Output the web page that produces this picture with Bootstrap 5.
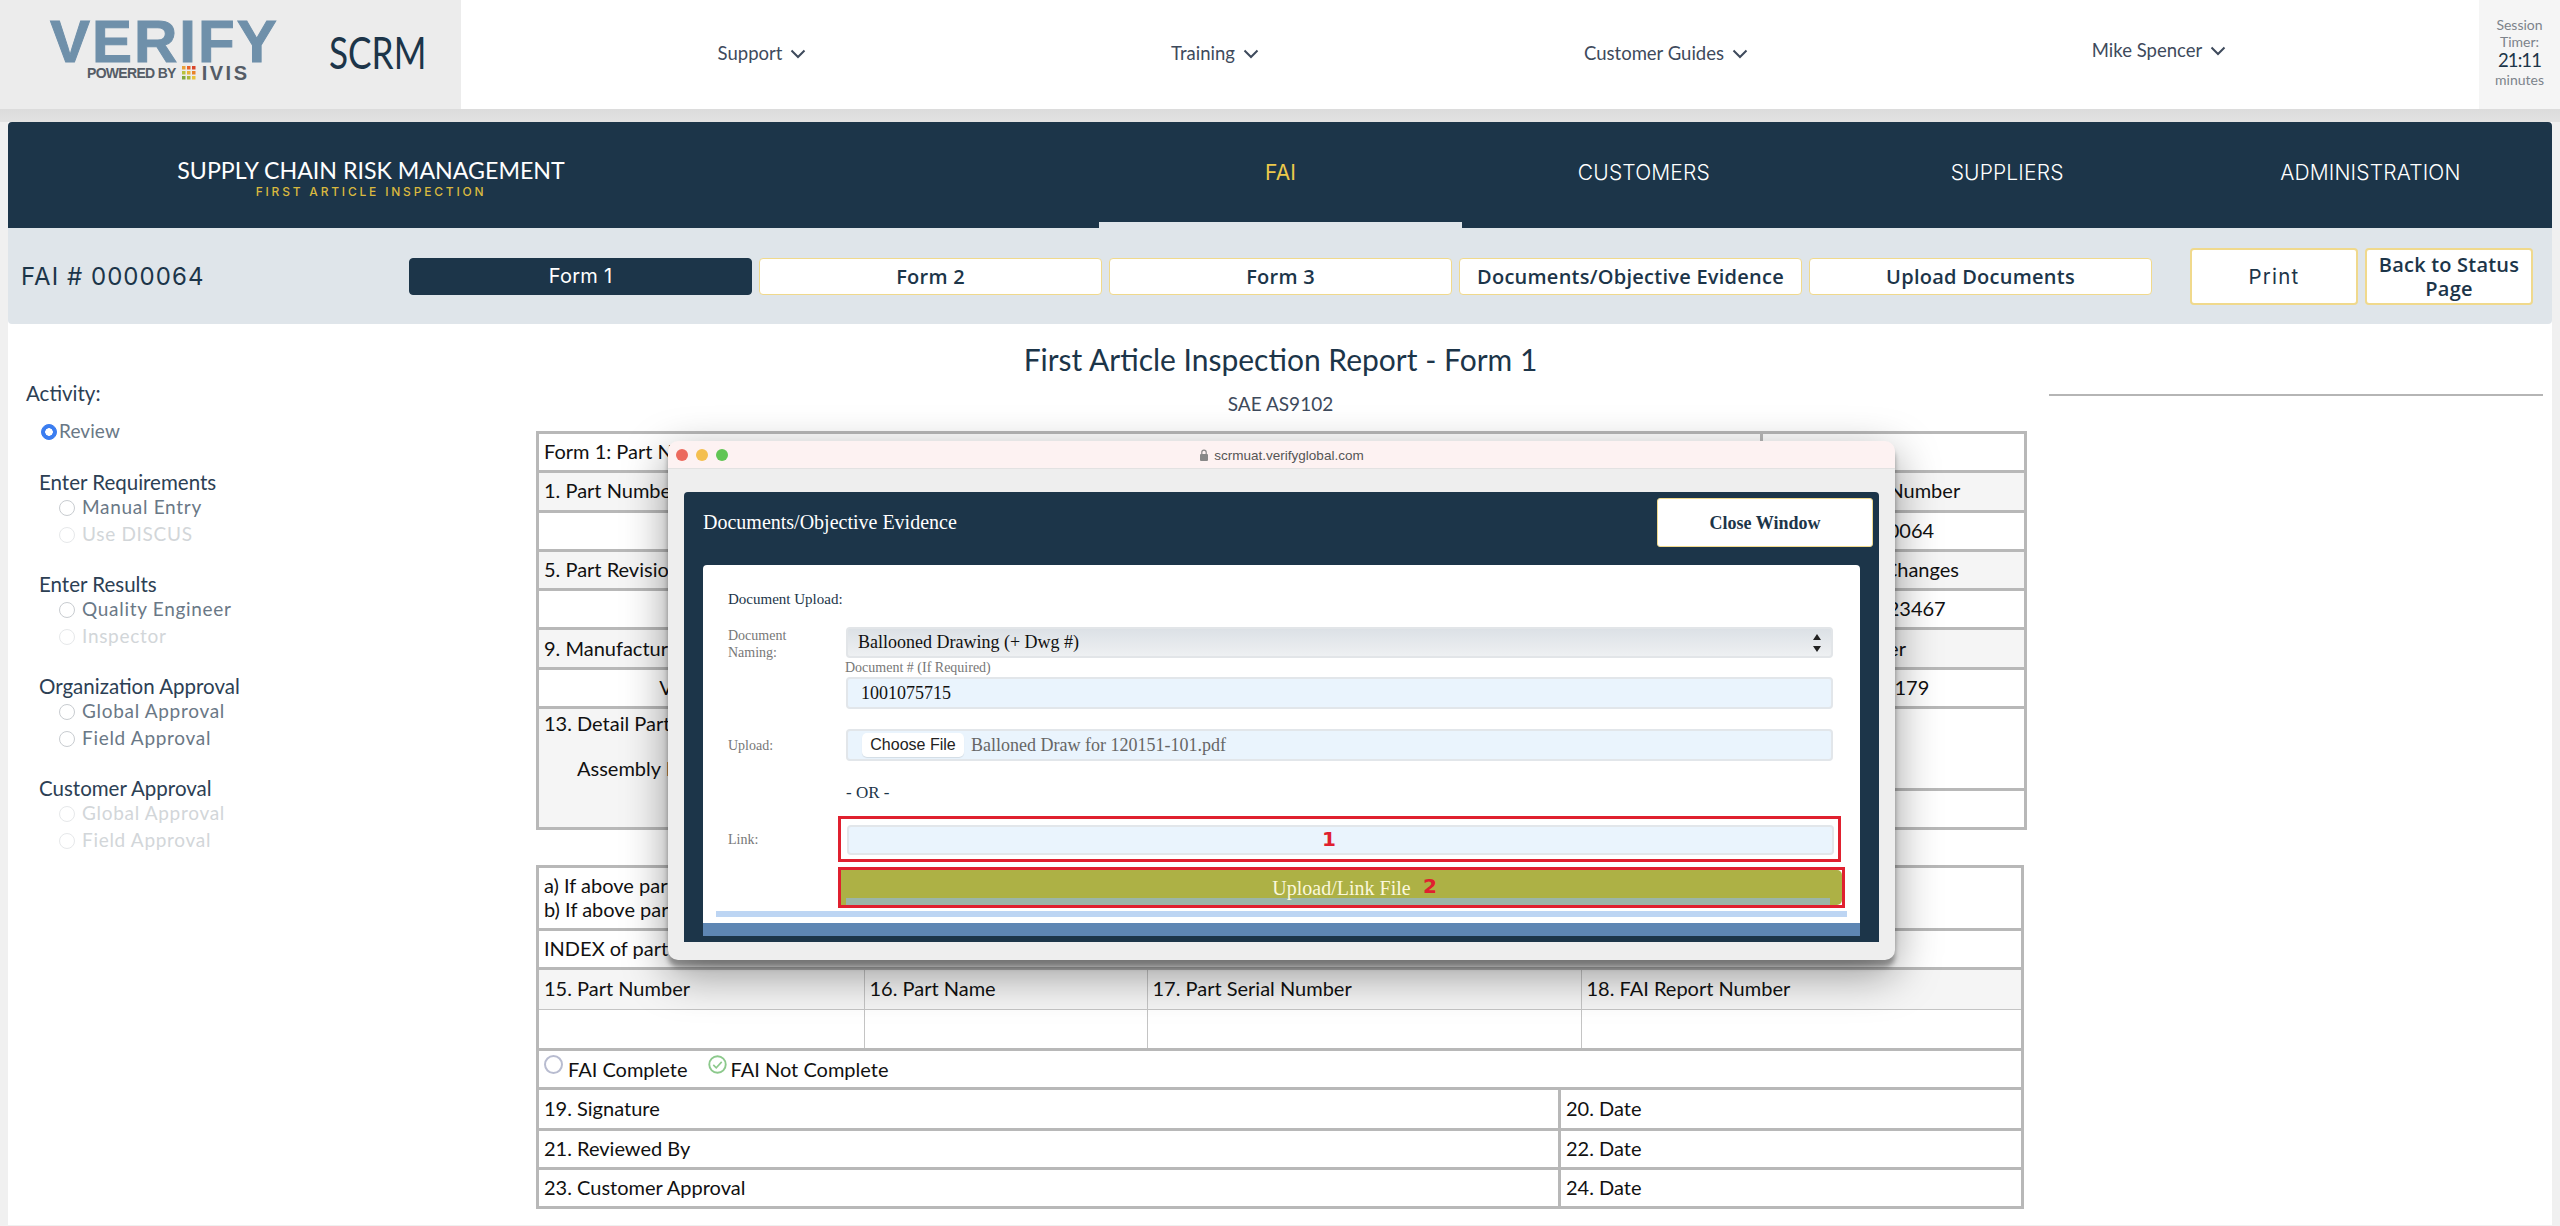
<!DOCTYPE html>
<html lang="en">
<head>
<meta charset="utf-8">
<title>FAI Form 1</title>
<link href="https://cdn.jsdelivr.net/npm/bootstrap@5.3.0/dist/css/bootstrap.min.css" rel="stylesheet">
<style>
html,body{height:1226px;overflow:hidden}
body{background:#f0f0f0;font-family:Lato,"Liberation Sans",sans-serif;color:#111;position:relative;width:2560px}
.topbar{height:109px;background:#fff;box-shadow:0 1px 2px rgba(0,0,0,.18)}
.gutter{height:13px;background:linear-gradient(#dcdcdc,#e2e2e2)}
.logopanel{width:461px;background:#ececec;position:relative}
.vlogo{position:absolute;left:50px;top:20px;font:700 60px/44px "Liberation Sans",sans-serif;color:#6f90aa;letter-spacing:2px;-webkit-text-stroke:1px #6f90aa}
.vsub{position:absolute;left:87px;top:65px;display:flex;align-items:center;gap:6px;color:#555c66;white-space:nowrap}
.vsub b{font:700 14px/16px "Liberation Sans",sans-serif;letter-spacing:-.7px}
.vsub i{font:700 20px/16px "Liberation Sans",sans-serif;letter-spacing:2.5px}
.scrm{position:absolute;left:329px;top:27px;font:400 44px/50px Lato,"Liberation Sans",sans-serif;color:#1c3549;transform:scaleX(.8);transform-origin:0 0}
.topnav{flex:1;display:grid;grid-template-columns:454px 452px 450px 536px;padding-left:74px}
.topnav a{display:flex;align-items:center;justify-content:center;gap:8px;color:#3e4a5c;font-size:18.5px;text-decoration:none;padding-bottom:2px}
.topnav a.me{padding-bottom:7px}
.timer{width:81px;background:#f5f5f5;color:#7c838b;font-size:14px;line-height:17px;text-align:center;padding-top:16px}
.timer strong{display:block;font-weight:400;font-size:18.5px;line-height:21px;color:#1c3549;letter-spacing:-.9px}
.shell{margin:0 8px;background:#fff;height:1103px}
.bandmain{height:106px;background:#1c3549;border-radius:4px 4px 0 0;display:flex}
.brandbox{width:1091px;display:flex}
.brandin{width:726px;text-align:center;padding-top:34px}
.brandtop{color:#fff;font-size:23.2px;line-height:28px}
.brandsub{color:#d9b93f;font:500 12px/14px Inter,sans-serif;letter-spacing:2.8px;margin-top:1px}
.tabs{flex:1;display:grid;grid-template-columns:repeat(4,1fr)}
.tabs a{color:#fff;font:300 21px/1 Inter,"Open Sans",sans-serif;text-decoration:none;text-align:center;padding-top:40px;letter-spacing:.15px}
.tabs a.on{color:#ecc94b;font-weight:400;background:linear-gradient(#1c3549 calc(100% - 6px),#dfe5ea calc(100% - 6px))}
.subbar{height:96px;background:#dfe5ea;border-radius:0 0 4px 4px;display:flex;align-items:center;padding-left:14px}
.fainum{width:387px;color:#1c3549;font:400 24px/1 Inter,sans-serif;letter-spacing:1.05px;padding-top:1px;margin-left:-1px;margin-right:1px}
.formbtns{display:flex;gap:7px}
.fbtn{width:343px;height:37px;background:#fff;border:1px solid #f0d98c;border-radius:4px;color:#1c3549;font:600 20px/35px "Open Sans",sans-serif;text-align:center;padding:0;letter-spacing:.25px}
.fbtn.active{background:#1c3549;border-color:#1c3549;color:#fff;font:400 20px/35px Inter,sans-serif}
.pbtns{display:flex;gap:7px;margin-left:38px}
.pbtn{width:168px;height:57px;background:#fff;border:2px solid #f0d98c;border-radius:4px;color:#1c3549;font:600 20px/24px "Open Sans",sans-serif;text-align:center;padding:2px 0 0;letter-spacing:.2px}
.pbtn.print{font:400 20.5px/24px Inter,sans-serif;letter-spacing:1.2px}
.mainflex{display:flex}
.side{width:528px;padding:0 0 0 18px;flex:none}
.act{font-size:20.5px;line-height:24px;color:#2c4054;margin-top:57px}
.rad{display:flex;align-items:center;font-size:19px;line-height:24px;color:#6a7886;letter-spacing:.7px;height:26.5px;padding-left:33px;margin:0}
.rad input.form-check-input{width:16px;height:16px;margin:2px 7px 0 0;flex:none;background-color:#fff;border:1.5px solid #c8ccd0;opacity:1}
.rad.off{color:#d2d6d9}
.rad.off input.form-check-input{border-color:#e6e8ea}
.rad.rev{padding-left:15px;margin-top:14px;margin-bottom:27px;height:24px;letter-spacing:.1px}
.rad.rev input.form-check-input{width:16px;height:16px;margin:2px 2px 0 0;background-color:#3b7df0;border-color:#3b7df0;background-image:radial-gradient(circle,#fff 0 3.5px,transparent 4px)}
.grp h6{font:400 20.5px/24px Lato,sans-serif;color:#2c4054;margin:0 0 0 13px}
.grp{margin-bottom:25px}
.center{width:1489px;flex:none}
.ttl{text-align:center;font:400 30px/36px Lato,sans-serif;color:#1c3549;margin:17px 0 0}
.ttl2{text-align:center;font-size:19px;line-height:24px;color:#3e4a5c;margin:15px 0 15px}
.right{flex:1;padding:70px 9px 0 24px}
.right hr{margin:0;border-top:2px solid #b5b5b5;opacity:1}
.rep{width:1488px;table-layout:fixed;border-collapse:collapse;margin:0;font-size:20px;line-height:24px;color:#111;background:#fff}
.rep td{border:3px solid #b8b8b8;padding:2px 5px 4px;height:39.3px;background:#fff;vertical-align:middle}
.rep td.lbl{background:#f5f5f5}
.rep td.val{text-align:center}
.rep2{margin-top:35px}
.rep3 tr:first-child td{border-top:0}
.rep3 td{height:39px}
.inner{width:100%;table-layout:fixed;border-collapse:collapse}
.rep td.holder{padding:0}
.rep .inner td{border:1.5px solid #c4c4c4;height:39px;padding:2px 5px 4px}
.rep .inner tr:first-child td{border-top:0}
.rep .inner tr:last-child td{border-bottom:0}
.rep .inner td:first-child{border-left:0}
.rep .inner td:last-child{border-right:0}
.mark1{display:inline-block;width:19px;height:19px;border:2px solid #b8bcd0;border-radius:50%;margin-right:5px;vertical-align:3px}
.chk{vertical-align:3px;margin-right:4px;margin-left:15px}
/* window */
.win{position:absolute;left:668px;top:441px;width:1227px;height:519px;background:#eeeeee;border-radius:10px;box-shadow:0 14px 45px rgba(0,0,0,.4),0 7px 5px rgba(0,0,0,.35);font-family:"Liberation Serif",serif;display:flex;flex-direction:column}
.winbar{height:28px;flex:none;background:#fdf2f2;border-radius:10px 10px 0 0;border-bottom:1px solid #e2e2e2;position:relative;display:flex;align-items:center;justify-content:center;font:13.5px/1 "Liberation Sans",sans-serif;color:#555;gap:5px;padding-top:2px}
.dots{position:absolute;left:8px;top:8px;display:flex;gap:8px}
.dots span{width:12px;height:12px;border-radius:50%}
.dr{background:#ec6a5e}.dy{background:#f4bf4f}.dg{background:#61c554}
.panel{margin:23px 16px 18px;background:#1c3549;border-radius:4px 4px 0 0;flex:1;display:flex;flex-direction:column;padding:0 0 6px}
.phead{height:73px;flex:none;display:flex;justify-content:space-between;align-items:flex-start;padding:6px 6px 0 19px;color:#fff;font-size:20px}
.phead span{line-height:49px}
.closebtn{width:216px;height:49px;background:#fff;border:1px solid #f0d98c;border-radius:3px;color:#1c3549;font:700 18px/1 "Liberation Serif",serif;padding:0}
.pcard{margin:0 19px;background:#fff;border-radius:4px 4px 0 0;flex:1;padding:24px 13px 0 25px;position:relative;display:flex;flex-direction:column}
.pbar{margin:0 19px;height:13px;background:#5e86b3;flex:none}
.dul{font-size:15px;line-height:20px;color:#1c3549}
.frow{display:flex}
.r-a{margin-top:18px}.r-b{margin-top:20px}
.lab{width:118px;flex:none;font-size:14px;line-height:17px;color:#777}
.fld{width:987px;flex:none}
.sel.form-select{height:31px;min-height:0;padding:0 0 0 10px;font:18px/27px "Liberation Serif",serif;color:#111;border:2px solid #e2e5e8;border-radius:4px;background:url("data:image/svg+xml,%3Csvg xmlns='http://www.w3.org/2000/svg' width='10' height='18'%3E%3Cpath d='M5 0l4 6H1zM5 18l-4-6h8z' fill='%23222'/%3E%3C/svg%3E") no-repeat right 9px center/10px 18px,linear-gradient(#dce1e6,#eef0f2)}
.cap{font-size:14px;line-height:19px;color:#777;margin-left:-1px}
.inp.form-control{height:32px;min-height:0;padding:0 0 0 13px;font:18px/28px "Liberation Serif",serif;color:#111;background:#eaf4fd;border:2px solid #e2e6ea;border-radius:4px}
.filebox{height:32px;background:#eaf4fd;border:2px solid #e2e6ea;border-radius:4px;display:flex;align-items:center;padding-left:14px;gap:7px;color:#666;font-size:18px}
.filebtn{width:102px;height:24px;background:#fff;border:0;border-radius:5px;color:#222;font:16px/24px "Liberation Sans",sans-serif;padding:0;box-shadow:0 1px 1px rgba(0,0,0,.1)}
.orr{font-size:17px;line-height:20px;color:#1c3549;margin:22px 0 13px 118px}
.redbox{border:3px solid #e0202f;margin-left:110px;position:relative}
.redbox.r1{width:1003px;height:46px;padding:6px 4px 0 6px;margin-bottom:5px}
.redbox.r1 .inp{height:30px;width:987px}
.redbox.r2{width:1007px;height:41px}
.linkl{position:absolute;left:-113px;top:12px;font-size:14px;line-height:17px;color:#777;width:100px}
.num{position:absolute;color:#e0202f;font:700 20px/24px "DejaVu Sans",sans-serif}
.n1{left:481px;top:8px}.n2{left:582px;top:4px}
.go{display:block;width:100%;height:35px;border:0;padding:0;text-align:center;color:#fbf8dc;font:20px/32px "Liberation Serif",serif;background:linear-gradient(#9bb5a9,#9bb5a9) no-repeat 5px 100%/calc(100% - 17px) 7px,#adb145;border-radius:0 5px 5px 0}
.strip{height:6px;background:#bdd5f3;margin:3px 0 0 -12px;width:1131px;flex:none}
.asm{padding:21px 0 0 33px}
.rep td.tall{height:82px}
.rep td.ab{height:62.5px}
</style>
</head>
<body>
<div class="d-flex topbar">
  <div class="logopanel flex-none">
    <span class="vlogo">VERIFY</span>
    <span class="vsub"><b>POWERED BY</b>
      <svg width="14" height="14" viewBox="0 0 14 14"><g><rect x="0" y="0" width="3.5" height="3.5" fill="#e8a13a"/><rect x="5" y="0" width="3.5" height="3.5" fill="#e8622a"/><rect x="10" y="0" width="3.5" height="3.5" fill="#d9452a"/><rect x="0" y="5" width="3.5" height="3.5" fill="#b8c23c"/><rect x="5" y="5" width="3.5" height="3.5" fill="#e8b23a"/><rect x="10" y="5" width="3.5" height="3.5" fill="#e8822a"/><rect x="0" y="10" width="3.5" height="3.5" fill="#7fa83c"/><rect x="5" y="10" width="3.5" height="3.5" fill="#a8b83c"/><rect x="10" y="10" width="3.5" height="3.5" fill="#e8c23a"/></g></svg>
      <i>IVIS</i></span>
    <span class="scrm">SCRM</span>
  </div>
  <nav class="topnav">
    <a href="#">Support <svg width="16" height="10" viewBox="0 0 16 10"><path d="M1.5 1.5L8 8l6.5-6.5" fill="none" stroke="#3e4a5c" stroke-width="2"/></svg></a>
    <a href="#">Training <svg width="16" height="10" viewBox="0 0 16 10"><path d="M1.5 1.5L8 8l6.5-6.5" fill="none" stroke="#3e4a5c" stroke-width="2"/></svg></a>
    <a href="#">Customer Guides <svg width="16" height="10" viewBox="0 0 16 10"><path d="M1.5 1.5L8 8l6.5-6.5" fill="none" stroke="#3e4a5c" stroke-width="2"/></svg></a>
    <a href="#" class="me">Mike Spencer <svg width="16" height="10" viewBox="0 0 16 10"><path d="M1.5 1.5L8 8l6.5-6.5" fill="none" stroke="#3e4a5c" stroke-width="2"/></svg></a>
  </nav>
  <div class="timer">Session<br>Timer:<strong>21:11</strong>minutes</div>
</div>
<div class="gutter"></div>
<div class="shell">
  <div class="bandmain">
    <div class="brandbox"><div class="brandin"><div class="brandtop">SUPPLY CHAIN RISK MANAGEMENT</div><div class="brandsub">FIRST ARTICLE INSPECTION</div></div></div>
    <div class="tabs"><a href="#" class="on">FAI</a><a href="#">CUSTOMERS</a><a href="#">SUPPLIERS</a><a href="#">ADMINISTRATION</a></div>
  </div>
  <div class="subbar">
    <div class="fainum">FAI # 0000064</div>
    <div class="formbtns">
      <button class="btn fbtn active">Form 1</button>
      <button class="btn fbtn">Form 2</button>
      <button class="btn fbtn">Form 3</button>
      <button class="btn fbtn">Documents/Objective Evidence</button>
      <button class="btn fbtn">Upload Documents</button>
    </div>
    <div class="pbtns">
      <button class="btn pbtn print">Print</button>
      <button class="btn pbtn">Back to Status Page</button>
    </div>
  </div>
  <div class="mainflex">
    <aside class="side">
      <div class="act">Activity:</div>
      <label class="rad rev"><input class="form-check-input" type="radio" checked>Review</label>
      <div class="grp"><h6>Enter Requirements</h6>
        <label class="rad"><input class="form-check-input" type="radio">Manual Entry</label>
        <label class="rad off"><input class="form-check-input" type="radio" disabled>Use DISCUS</label></div>
      <div class="grp"><h6>Enter Results</h6>
        <label class="rad"><input class="form-check-input" type="radio">Quality Engineer</label>
        <label class="rad off"><input class="form-check-input" type="radio" disabled>Inspector</label></div>
      <div class="grp"><h6>Organization Approval</h6>
        <label class="rad"><input class="form-check-input" type="radio">Global Approval</label>
        <label class="rad"><input class="form-check-input" type="radio">Field Approval</label></div>
      <div class="grp"><h6>Customer Approval</h6>
        <label class="rad off"><input class="form-check-input" type="radio" disabled>Global Approval</label>
        <label class="rad off"><input class="form-check-input" type="radio" disabled>Field Approval</label></div>
    </aside>
    <section class="center">
      <h1 class="ttl">First Article Inspection Report - Form 1</h1>
      <div class="ttl2">SAE AS9102</div>
      <table class="rep">
        <colgroup><col style="width:344px"><col style="width:440px"><col style="width:440px"><col style="width:264px"></colgroup>
        <tr><td colspan="3">Form 1: Part Number Accountability</td><td></td></tr>
        <tr><td class="lbl">1. Part Number</td><td class="lbl">2. Part Name</td><td class="lbl">3. Serial Number</td><td class="lbl">4. FAI Report Number</td></tr>
        <tr><td class="val"></td><td class="val"></td><td class="val"></td><td class="val">0000064</td></tr>
        <tr><td class="lbl">5. Part Revision Level</td><td class="lbl">6. Drawing Number</td><td class="lbl">7. Drawing Revision Level</td><td class="lbl">8. Additional Changes</td></tr>
        <tr><td class="val"></td><td class="val"></td><td class="val"></td><td class="val">100123467</td></tr>
        <tr><td class="lbl">9. Manufacturing Process Reference</td><td class="lbl">10. Organization Name</td><td class="lbl">11. Supplier Code</td><td class="lbl">12. PO Number</td></tr>
        <tr><td class="val">Verification</td><td class="val"></td><td class="val"></td><td class="val">V23179</td></tr>
        <tr><td colspan="3" rowspan="2" class="lbl align-top">13. Detail Part / Assembly FAI<div class="asm">Assembly FAI</div></td><td class="tall"></td></tr>
        <tr><td></td></tr>
      </table>
      <table class="rep rep2">
        <tr><td class="ab">a) If above part number is a detail part only, go to Field 19<br>b) If above part number is an assembly, go to the "INDEX" section below.</td></tr>
        <tr><td>INDEX of part numbers or sub-assembly numbers required to make the assembly noted above.</td></tr>
        <tr><td class="holder"><table class="inner">
          <colgroup><col style="width:325px"><col style="width:283px"><col style="width:434px"><col></colgroup>
          <tr><td class="lbl">15. Part Number</td><td class="lbl">16. Part Name</td><td class="lbl">17. Part Serial Number</td><td class="lbl">18. FAI Report Number</td></tr>
          <tr><td></td><td></td><td></td><td></td></tr>
        </table></td></tr>
        <tr><td><span class="mark1"></span>FAI Complete <svg class="chk" width="19" height="19" viewBox="0 0 18 18"><circle cx="9" cy="9" r="7.8" fill="none" stroke="#8cc98c" stroke-width="1.8"/><path d="M5 9.3l2.8 2.8L13 6.5" fill="none" stroke="#8cc98c" stroke-width="1.5"/></svg>FAI Not Complete</td></tr>
      </table>
      <table class="rep rep3">
        <colgroup><col style="width:1022px"><col></colgroup>
        <tr><td>19. Signature</td><td>20. Date</td></tr>
        <tr><td>21. Reviewed By</td><td>22. Date</td></tr>
        <tr><td>23. Customer Approval</td><td>24. Date</td></tr>
      </table>
    </section>
    <div class="right"><hr></div>
  </div>
</div>

<div class="win">
  <div class="winbar">
    <span class="dots"><span class="dr"></span><span class="dy"></span><span class="dg"></span></span>
    <svg width="10" height="13" viewBox="0 0 10 13"><rect x="1" y="5" width="8" height="7" rx="1" fill="#888"/><path d="M2.8 5V3.3a2.2 2.2 0 0 1 4.4 0V5" fill="none" stroke="#888" stroke-width="1.2"/></svg>
    <span>scrmuat.verifyglobal.com</span>
  </div>
  <div class="panel">
    <div class="phead"><span>Documents/Objective Evidence</span><button class="btn closebtn">Close Window</button></div>
    <div class="pcard">
      <div class="dul">Document Upload:</div>
      <div class="frow r-a">
        <div class="lab">Document<br>Naming:</div>
        <div class="fld">
          <select class="form-select sel"><option>Ballooned Drawing (+ Dwg #)</option></select>
          <div class="cap">Document # (If Required)</div>
          <input class="form-control inp" value="1001075715">
        </div>
      </div>
      <div class="frow r-b">
        <div class="lab align-self-center">Upload:</div>
        <div class="fld filebox"><button class="btn filebtn">Choose File</button><span>Balloned Draw for 120151-101.pdf</span></div>
      </div>
      <div class="orr">- OR -</div>
      <div class="redbox r1"><span class="linkl">Link:</span><input class="form-control inp"><span class="num n1">1</span></div>
      <div class="redbox r2"><button class="btn go">Upload/Link File</button><span class="num n2">2</span></div>
      <div class="strip"></div>
    </div>
    <div class="pbar"></div>
  </div>
</div>
<script src="https://cdn.jsdelivr.net/npm/bootstrap@5.3.0/dist/js/bootstrap.bundle.min.js"></script>
</body>
</html>
